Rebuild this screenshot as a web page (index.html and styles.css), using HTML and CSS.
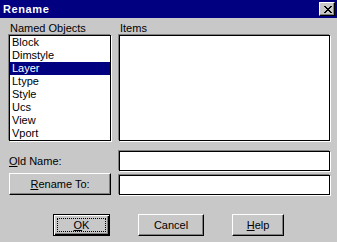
FILE: index.html
```html
<!DOCTYPE html>
<html lang="en">
<head>
    <meta charset="UTF-8">
    <title>Rename</title>
    <link rel="stylesheet" href="styles.css">
</head>
<body>
    <div class="dialog">
        <div class="titlebar">
            <span class="title">Rename</span>
            <span class="close-btn">
                <svg width="8" height="7" viewBox="0 0 8 7" shape-rendering="crispEdges">
                    <rect x="0" y="0" width="2" height="1"/><rect x="6" y="0" width="2" height="1"/>
                    <rect x="1" y="1" width="2" height="1"/><rect x="5" y="1" width="2" height="1"/>
                    <rect x="2" y="2" width="4" height="1"/>
                    <rect x="3" y="3" width="2" height="1"/>
                    <rect x="2" y="4" width="4" height="1"/>
                    <rect x="1" y="5" width="2" height="1"/><rect x="5" y="5" width="2" height="1"/>
                    <rect x="0" y="6" width="2" height="1"/><rect x="6" y="6" width="2" height="1"/>
                </svg>
            </span>
        </div>

        <div class="body">
            <div class="label">Named Objects</div>
            <div class="label">Items</div>

            <div class="listbox">
                <div class="item">Block</div>
                <div class="item">Dimstyle</div>
                <div class="item selected">Layer</div>
                <div class="item">Ltype</div>
                <div class="item">Style</div>
                <div class="item">Ucs</div>
                <div class="item">View</div>
                <div class="item">Vport</div>
            </div>
            <div class="listbox"></div>

            <div class="field-label"><u>O</u>ld Name:</div>
            <div class="field"></div>

            <button class="btn btn-rename"><u>R</u>ename To:</button>
            <div class="field field-end"></div>
        </div>

        <div class="actions">
            <button class="btn btn-default btn-ok"><span class="focus"><u>O</u>K</span></button>
            <button class="btn btn-cancel">Cancel</button>
            <button class="btn btn-help"><u>H</u>elp</button>
        </div>
    </div>
</body>
</html>
```

FILE: styles.css
```css
body {
    margin: 0;
    background-color: #c8c8c8;
    font-family: "Liberation Sans", Arial, sans-serif;
    font-size: 11px;
    color: #000;
}
.dialog {
    width: 337px;
    height: 242px;
}
.titlebar {
    display: flex;
    justify-content: space-between;
    align-items: center;
    height: 18px;
    padding-left: 3px;
    padding-right: 2px;
    background-color: #000080;
}
.title {
    color: #fff;
    font-weight: bold;
    letter-spacing: 0.6px;
    line-height: 18px;
}
.close-btn {
    display: flex;
    align-items: center;
    justify-content: center;
    width: 16px;
    height: 14px;
    box-sizing: border-box;
    background-color: #c8c8c8;
    border: 1px solid;
    border-color: #fff #000 #000 #fff;
    box-shadow: inset -1px -1px 0 #808080;
    padding-left: 1px;
}
.body {
    display: grid;
    grid-template-columns: 102px 211px;
    column-gap: 8px;
    padding-left: 9px;
    margin-top: 4px;
}
.label {
    line-height: 13px;
    padding-left: 1px;
}
.listbox {
    height: 106px;
    box-sizing: border-box;
    border: 1px solid #000;
    background-color: #fff;
    box-shadow: -1px -1px 0 #808080, 1px 1px 0 #fff;
}
.item {
    height: 13px;
    line-height: 13px;
    padding-left: 2px;
}
.item.selected {
    background-color: #000080;
    color: #fff;
}
.field-label {
    display: flex;
    align-items: center;
    margin-top: 10px;
    height: 20px;
}
.field {
    margin-top: 10px;
    height: 20px;
    box-sizing: border-box;
    border: 1px solid #000;
    background-color: #fff;
    box-shadow: -1px -1px 0 #808080, 1px 1px 0 #fff;
}
.field.field-end {
    align-self: end;
    margin-top: 0;
}
.btn {
    font-family: "Liberation Sans", Arial, sans-serif;
    font-size: 11px;
    color: #000;
    background-color: #c8c8c8;
    box-sizing: border-box;
    padding: 0;
    border: 1px solid;
    border-color: #fff #000 #000 #fff;
    box-shadow: inset -1px -1px 0 #808080;
}
.btn-rename {
    margin-top: 2px;
    height: 22px;
}
.actions {
    display: flex;
    gap: 28px;
    padding-left: 53px;
    margin-top: 19px;
}
.actions .btn {
    height: 22px;
}
.btn-ok {
    width: 57px;
}
.btn-cancel {
    width: 66px;
}
.btn-help {
    width: 52px;
}
.btn-default {
    border: 1px solid #000;
    box-shadow: inset 1px 1px 0 #fff, inset -1px -1px 0 #000, inset -2px -2px 0 #808080;
    padding: 3px;
}
.focus {
    display: flex;
    align-items: center;
    justify-content: center;
    height: 100%;
    border: 1px dotted #000;
    box-sizing: border-box;
}
```
